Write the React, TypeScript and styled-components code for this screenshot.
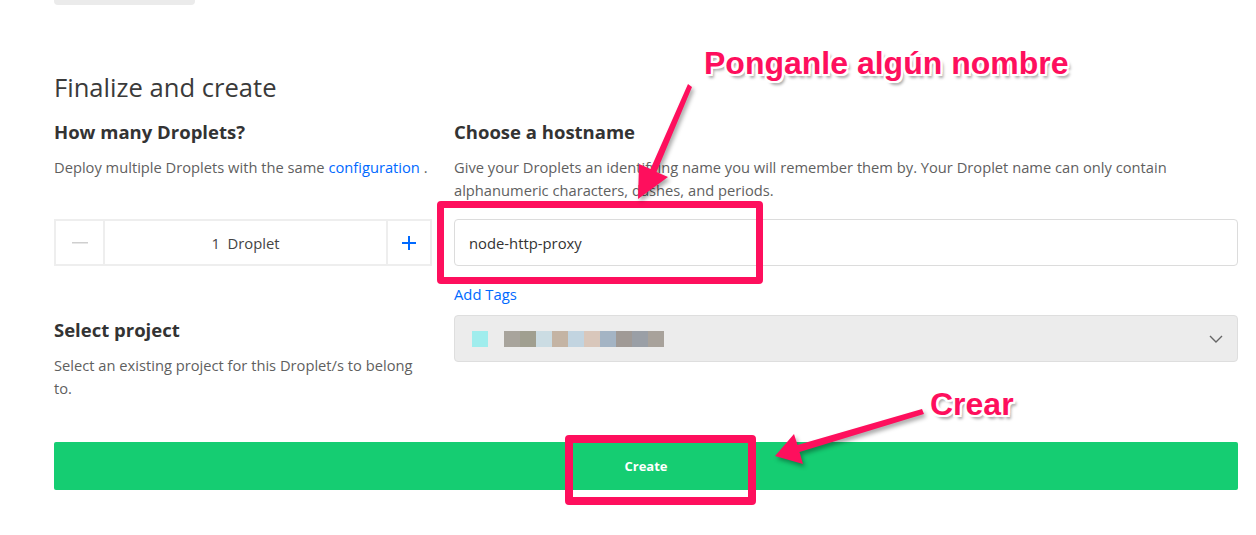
import React from 'react';
import styled, { createGlobalStyle } from 'styled-components';

const GlobalStyle = createGlobalStyle`
  body {
    margin: 0;
    background: #fff;
    font-family: "Open Sans", "Liberation Sans", Arial, sans-serif;
    color: #333;
  }
`;

const Page = styled.div`
  position: relative;
  width: 1256px;
  height: 535px;
  overflow: hidden;
  padding: 0 18px 0 54px;
  box-sizing: border-box;
`;

const TopTab = styled.div`
  width: 141px;
  height: 5px;
  background: #ebebeb;
  border-radius: 0 0 4px 4px;
`;

const SectionTitle = styled.h2`
  margin: 68px 0 17px;
  font-size: 25.6px;
  line-height: 30px;
  font-weight: 400;
  color: #3a3a3a;
`;

const Grid = styled.div`
  display: grid;
  grid-template-columns: 378px 784px;
  column-gap: 22px;
  align-items: start;
`;

const Title = styled.h3<{ $top?: number }>`
  margin: ${(p) => p.$top ?? 0}px 0 12px;
  font-size: 18.5px;
  line-height: 24px;
  font-weight: 700;
  color: #333;
`;

const Desc = styled.p`
  margin: 0;
  font-size: 14.7px;
  line-height: 22.5px;
  color: #5f5f5f;
`;

const Link = styled.a`
  color: #0069ff;
  text-decoration: none;
`;

const Stepper = styled.div`
  display: grid;
  grid-template-columns: 49px 1fr 44px;
  height: 47px;
  margin-top: 18px;
  border: 2px solid #eeeeee;
  box-sizing: border-box;
`;

const StepCell = styled.div<{ $divider?: 'left' | 'right' }>`
  display: flex;
  align-items: center;
  justify-content: center;
  font-size: 14.8px;
  color: #444;
  ${(p) => (p.$divider ? `border-${p.$divider}: 2px solid #eeeeee;` : '')}
`;

const Input = styled.div`
  margin-top: 18px;
  height: 47px;
  border: 1px solid #dcdcdc;
  border-radius: 4px;
  box-sizing: border-box;
  display: flex;
  align-items: center;
  padding-left: 14px;
  font-size: 14.8px;
  color: #333;
`;

const AddTags = styled.a`
  display: block;
  margin: 17px 0 10px;
  font-size: 14.8px;
  line-height: 22px;
  color: #0069ff;
`;

const Select = styled.div`
  height: 47px;
  background: #ececec;
  border: 1px solid #dedede;
  border-radius: 4px;
  box-sizing: border-box;
  display: flex;
  align-items: center;
  padding: 0 14px 0 17px;
`;

const Pixels = styled.div`
  display: flex;
  flex: 1;
`;

const Pixel = styled.span<{ $c: string; $gap?: boolean }>`
  width: 16px;
  height: 16px;
  background: ${(p) => p.$c};
  margin-right: ${(p) => (p.$gap ? 16 : 0)}px;
`;

const CreateButton = styled.button`
  display: block;
  width: 1184px;
  height: 48px;
  margin-top: 43px;
  border: none;
  border-radius: 2px;
  background: #15cd72;
  color: #fff;
  font-family: inherit;
  font-size: 13px;
  font-weight: 700;
`;

const Note = styled.div<{ $x: number; $y: number }>`
  position: absolute;
  left: ${(p) => p.$x}px;
  top: ${(p) => p.$y}px;
  font-family: "Liberation Sans", Arial, sans-serif;
  font-weight: 700;
  font-size: 32px;
  line-height: 36px;
  color: #fe0f5d;
  white-space: nowrap;
  text-shadow: -2px 0 #fff, 2px 0 #fff, 0 -2px #fff, 0 2px #fff,
    -2px -2px #fff, 2px -2px #fff, -2px 2px #fff, 2px 2px #fff,
    3px 4px 3px rgba(0, 0, 0, 0.35);
`;

const Frame = styled.div<{ $x: number; $y: number; $w: number; $h: number; $t: number }>`
  position: absolute;
  left: ${(p) => p.$x}px;
  top: ${(p) => p.$y}px;
  width: ${(p) => p.$w}px;
  height: ${(p) => p.$h}px;
  border: ${(p) => p.$t}px solid #fe0f5d;
  border-radius: 4px;
  box-sizing: border-box;
`;

const Arrows = styled.svg`
  position: absolute;
  left: 0;
  top: 0;
  pointer-events: none;
  filter: drop-shadow(2px 3px 2px rgba(0, 0, 0, 0.35));
`;

const projectPixels = [
  '#a8a49c', '#a09f90', '#cbdce3', '#c4b4a4', '#c2d4e0',
  '#d9c7bb', '#a4b4c4', '#a09a96', '#9a9fa6', '#a8a29b',
];

export default function App() {
  return (
    <Page>
      <GlobalStyle />
      <TopTab />
      <SectionTitle>Finalize and create</SectionTitle>
      <Grid>
        <div>
          <Title>How many Droplets?</Title>
          <Desc>
            Deploy multiple Droplets with the same <Link>configuration</Link> .
          </Desc>
        </div>
        <div>
          <Title>Choose a hostname</Title>
          <Desc>
            Give your Droplets an identifying name you will remember them by. Your Droplet name can only contain
            alphanumeric characters, dashes, and periods.
          </Desc>
        </div>

        <Stepper>
          <StepCell $divider="right">
            <svg width="16" height="2" viewBox="0 0 16 2">
              <rect width="16" height="1.5" fill="#cfcfcf" />
            </svg>
          </StepCell>
          <StepCell>1 &nbsp;Droplet</StepCell>
          <StepCell $divider="left">
            <svg width="16" height="16" viewBox="0 0 16 16">
              <path d="M8 1v14M1 8h14" stroke="#0069ff" strokeWidth="2" />
            </svg>
          </StepCell>
        </Stepper>
        <div>
          <Input>node-http-proxy</Input>
          <AddTags>Add Tags</AddTags>
        </div>

        <div>
          <Title $top={3}>Select project</Title>
          <Desc>Select an existing project for this Droplet/s to belong to.</Desc>
        </div>
        <Select>
          <Pixels>
            <Pixel $c="#a0eded" $gap />
            {projectPixels.map((c, i) => (
              <Pixel key={i} $c={c} />
            ))}
          </Pixels>
          <svg width="14" height="8" viewBox="0 0 14 8">
            <path d="M1 1l6 6 6-6" fill="none" stroke="#666" strokeWidth="1.4" />
          </svg>
        </Select>
      </Grid>
      <CreateButton>Create</CreateButton>

      <Frame $x={437} $y={201} $w={326} $h={83} $t={7} />
      <Frame $x={565} $y={435} $w={191} $h={70} $t={8} />
      <Arrows width="1256" height="535" viewBox="0 0 1256 535">
        <polygon
          points="688,84 692,87 656.5,172 668,177 638,199 639,164 650.5,169"
          fill="#fe0f5d"
        />
        <polygon
          points="922,409 924,414 799.5,452 803,464 775,456 794,434 797.5,445"
          fill="#fe0f5d"
        />
      </Arrows>
      <Note $x={704} $y={45}>Ponganle algún nombre</Note>
      <Note $x={930} $y={386}>Crear</Note>
    </Page>
  );
}
